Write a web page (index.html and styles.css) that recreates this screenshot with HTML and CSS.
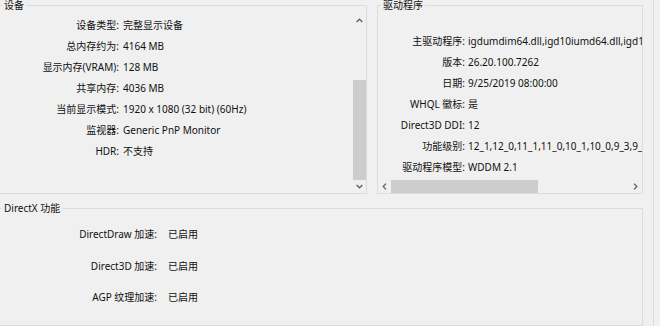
FILE: index.html
```html
<!DOCTYPE html>
<html lang="zh-CN">
<head>
    <meta charset="UTF-8">
    <title>DirectX 诊断工具 - 显示</title>
    <link rel="stylesheet" href="styles.css">
</head>
<body>
    <div class="page">
        <div class="top">
            <fieldset class="group group-device">
                <legend>设备</legend>
                <div class="panel">
                    <div class="rows rows-device">
                        <span class="label">设备类型:</span><span class="value">完整显示设备</span>
                        <span class="label">总内存约为:</span><span class="value">4164 MB</span>
                        <span class="label">显示内存(VRAM):</span><span class="value">128 MB</span>
                        <span class="label">共享内存:</span><span class="value">4036 MB</span>
                        <span class="label">当前显示模式:</span><span class="value">1920 x 1080 (32 bit) (60Hz)</span>
                        <span class="label">监视器:</span><span class="value">Generic PnP Monitor</span>
                        <span class="label">HDR:</span><span class="value">不支持</span>
                    </div>
                    <div class="vscroll">
                        <div class="sb-btn">
                            <svg width="7" height="5" viewBox="0 0 7 5"><polyline points="0.6,4 3.5,1.2 6.4,4" fill="none" stroke="#606060" stroke-width="1.3"/></svg>
                        </div>
                        <div class="sb-track"><div class="sb-thumb"></div></div>
                        <div class="sb-btn">
                            <svg width="7" height="5" viewBox="0 0 7 5"><polyline points="0.6,1 3.5,3.8 6.4,1" fill="none" stroke="#606060" stroke-width="1.3"/></svg>
                        </div>
                    </div>
                </div>
            </fieldset>
            <fieldset class="group group-driver">
                <legend>驱动程序</legend>
                <div class="rows rows-driver">
                    <span class="label">主驱动程序:</span><span class="value">igdumdim64.dll,igd10iumd64.dll,igd10iumd64.dll,igd12umd64.dll</span>
                    <span class="label">版本:</span><span class="value">26.20.100.7262</span>
                    <span class="label">日期:</span><span class="value">9/25/2019 08:00:00</span>
                    <span class="label">WHQL 徽标:</span><span class="value">是</span>
                    <span class="label">Direct3D DDI:</span><span class="value">12</span>
                    <span class="label">功能级别:</span><span class="value">12_1,12_0,11_1,11_0,10_1,10_0,9_3,9_2,9_1</span>
                    <span class="label">驱动程序模型:</span><span class="value">WDDM 2.1</span>
                </div>
                <div class="hscroll">
                    <div class="sb-btn">
                        <svg width="5" height="7" viewBox="0 0 5 7"><polyline points="4,0.6 1.2,3.5 4,6.4" fill="none" stroke="#606060" stroke-width="1.3"/></svg>
                    </div>
                    <div class="sb-track"><div class="sb-thumb"></div></div>
                    <div class="sb-btn">
                        <svg width="5" height="7" viewBox="0 0 5 7"><polyline points="1,0.6 3.8,3.5 1,6.4" fill="none" stroke="#606060" stroke-width="1.3"/></svg>
                    </div>
                </div>
            </fieldset>
        </div>
        <fieldset class="group group-dx">
            <legend>DirectX 功能</legend>
            <div class="rows rows-dx">
                <span class="label">DirectDraw 加速:</span><span class="value">已启用</span>
                <span class="label">Direct3D 加速:</span><span class="value">已启用</span>
                <span class="label">AGP 纹理加速:</span><span class="value">已启用</span>
            </div>
        </fieldset>
    </div>
</body>
</html>
```

FILE: styles.css
```css
body {
    margin: 0;
    background: #f0f0f0;
    font-family: "Noto Sans", "Noto Sans CJK SC", sans-serif;
    font-size: 10px;
    color: #111;
    overflow: hidden;
}
.page {
    width: 657px;
    min-height: 340px;
    margin-left: -4px;
    border-right: 1px solid #dcdcdc;
}
.top {
    display: flex;
    gap: 10px;
}
.group {
    margin: 0;
    padding: 0;
    min-width: 0;
    border: 1px solid #dcdcdc;
}
.group legend {
    padding: 0 2px;
    margin-left: 5px;
    line-height: 11px;
}
.group-device {
    width: 371px;
    box-sizing: border-box;
}
.group-driver {
    width: 266px;
    box-sizing: border-box;
    display: flex;
    flex-direction: column;
    height: 194px;
}
.group-driver legend {
    margin-left: 3px;
}
.group-dx {
    width: 647px;
    box-sizing: border-box;
    margin-top: 9px;
    height: 123px;
}
.panel {
    display: flex;
    height: 180px;
    padding-top: 2px;
}
.rows {
    display: grid;
    line-height: 21px;
    white-space: nowrap;
}
.label {
    text-align: right;
}
.value {
    overflow: hidden;
}
.rows-device {
    flex: 1;
    grid-template-columns: 122px 1fr;
    column-gap: 4px;
    padding-top: 2px;
    align-content: start;
}
.rows-driver {
    grid-template-columns: 87px 1fr;
    column-gap: 3px;
    padding-top: 20px;
    overflow: hidden;
}
.rows-dx {
    grid-template-columns: 160px 1fr;
    column-gap: 11px;
    line-height: 31.5px;
    padding-top: 5px;
}

/* scrollbars */
.vscroll {
    width: 13px;
    display: flex;
    flex-direction: column;
}
.vscroll .sb-btn {
    height: 14px;
}
.vscroll .sb-btn:last-child {
    height: 13px;
}
.vscroll .sb-track {
    flex: 1;
    padding-top: 53px;
}
.vscroll .sb-thumb {
    height: 100px;
    background: #cdcdcd;
}
.hscroll {
    margin-top: auto;
    height: 13px;
    display: flex;
}
.hscroll .sb-btn {
    width: 13px;
}
.hscroll .sb-track {
    flex: 1;
}
.hscroll .sb-thumb {
    width: 147px;
    height: 13px;
    background: #cdcdcd;
}
.sb-btn {
    display: flex;
    align-items: center;
    justify-content: center;
}
.sb-btn svg {
    display: block;
}
```
